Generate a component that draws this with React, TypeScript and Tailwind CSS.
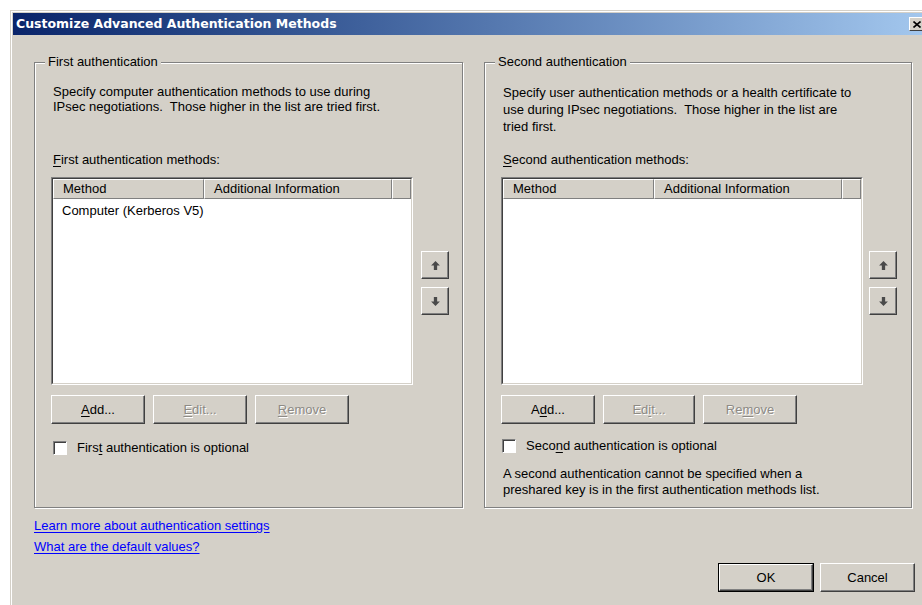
import type { ReactNode } from 'react';

// Classic raised push button (3D bevel)
const PushButton = ({
  children,
  disabled,
  isDefault,
  className = '',
}: {
  children: ReactNode;
  disabled?: boolean;
  isDefault?: boolean;
  className?: string;
}) => {
  const face = (
    <div
      className={`h-full w-full flex items-center justify-center border border-t-white border-l-white border-r-[#404040] border-b-[#404040] shadow-[inset_-1px_-1px_0_#808080] bg-[#d4d0c8] ${
        disabled ? 'text-[#8d8a85] [text-shadow:1px_1px_0_#ffffff]' : 'text-black'
      }`}
    >
      {children}
    </div>
  );
  return (
    <div className={`h-[29px] ${isDefault ? 'border border-black' : ''} ${className}`}>{face}</div>
  );
};

const U = ({ children }: { children: ReactNode }) => <span className="underline underline-offset-2">{children}</span>;

const ArrowButton = ({ dir }: { dir: 'up' | 'down' }) => (
  <div className="w-[28px] h-[28px] flex items-center justify-center border border-t-white border-l-white border-r-[#404040] border-b-[#404040] shadow-[inset_-1px_-1px_0_#808080]">
    <svg width="11" height="11" viewBox="0 0 10 10" className={dir === 'down' ? 'rotate-180' : ''}>
      <path d="M5 1 L9 5 L6.5 5 L6.5 9 L3.5 9 L3.5 5 L1 5 Z" fill="#4a4a4a" />
    </svg>
  </div>
);

const Checkbox = ({ label }: { label: ReactNode }) => (
  <div className="flex items-center gap-[10px] h-[16px]">
    <div className="w-[14px] h-[14px] bg-white border border-t-[#808080] border-l-[#808080] border-r-white border-b-white shadow-[inset_1px_1px_0_#404040]" />
    <span>{label}</span>
  </div>
);

const HeaderCell = ({ children, className = '' }: { children?: ReactNode; className?: string }) => (
  <div
    className={`h-[20px] flex items-center pl-[9px] border border-t-white border-l-white border-r-[#808080] border-b-[#808080] ${className}`}
  >
    {children}
  </div>
);

const MethodList = ({ rows }: { rows: string[] }) => (
  <div className="w-[362px] h-[208px] border border-t-[#808080] border-l-[#808080] border-r-white border-b-white">
    <div className="h-full w-full border border-t-[#404040] border-l-[#404040] border-r-[#d4d0c8] border-b-[#d4d0c8] bg-white flex flex-col">
      <div className="flex bg-[#d4d0c8]">
        <HeaderCell className="w-[151px]">Method</HeaderCell>
        <HeaderCell className="w-[188px]">Additional Information</HeaderCell>
        <HeaderCell className="flex-1" />
      </div>
      {rows.map((r) => (
        <div key={r} className="h-[22px] flex items-center pl-[9px] mt-[1px]">
          {r}
        </div>
      ))}
    </div>
  </div>
);

const GroupBox = ({
  title,
  className = '',
  children,
}: {
  title: string;
  className?: string;
  children: ReactNode;
}) => (
  <div
    className={`relative border border-[#808080] shadow-[1px_1px_0_#ffffff,inset_1px_1px_0_#ffffff] ${className}`}
  >
    <span className="absolute -top-[9px] left-[10px] px-[3px] bg-[#d4d0c8] leading-[16px]">{title}</span>
    {children}
  </div>
);

export default function App() {
  return (
    <div
      className="w-[922px] h-[605px] overflow-hidden bg-white pt-[10px] pl-[10px] text-[13px] text-black"
      style={{ fontFamily: '"Liberation Sans", Arial, sans-serif' }}
    >
      {/* window frame */}
      <div className="w-[930px] h-[620px] border-t border-l border-[#d4d0c8] bg-[#d4d0c8]">
        <div className="h-full border-t border-l border-white p-[1px] pr-0">
          {/* title bar */}
          <div className="h-[22px] flex items-center bg-gradient-to-r from-[#0a246a] to-[#a6caf0] pl-[3px]">
            <span
              className="text-white font-bold text-[12.5px]"
              style={{ fontFamily: '"DejaVu Sans", Verdana, sans-serif' }}
            >
              Customize Advanced Authentication Methods
            </span>
            <div className="ml-auto mr-[15px] w-[16px] h-[14px] shrink-0 flex items-center justify-center bg-[#d4d0c8] border border-t-white border-l-white border-r-[#404040] border-b-[#404040]">
              <svg width="8" height="7" viewBox="0 0 8 7">
                <path d="M0.5 0.5 L7.5 6.5 M7.5 0.5 L0.5 6.5" stroke="#000" strokeWidth="1.6" />
              </svg>
            </div>
          </div>

          {/* dialog body */}
          <div className="pl-[21px] pt-[27px] w-[910px]">
            <div className="flex gap-[21px]">
              <GroupBox title="First authentication" className="w-[429px] h-[446px]">
                <div className="pl-[16px] pt-[21px]">
                  <p className="ml-[2px] leading-[15px] h-[68px]">
                    Specify computer authentication methods to use during
                    <br />
                    IPsec negotiations.&nbsp; Those higher in the list are tried first.
                  </p>
                  <p className="ml-[2px] leading-[16px] h-[25px]">
                    <U>F</U>irst authentication methods:
                  </p>
                  <div className="flex items-center gap-[8px]">
                    <MethodList rows={['Computer (Kerberos V5)']} />
                    <div className="flex flex-col gap-[8px] mt-[4px]">
                      <ArrowButton dir="up" />
                      <ArrowButton dir="down" />
                    </div>
                  </div>
                  <div className="flex gap-[8px] mt-[10px]">
                    <PushButton className="w-[94px]">
                      <U>A</U>dd...
                    </PushButton>
                    <PushButton className="w-[94px]" disabled>
                      <U>E</U>dit...
                    </PushButton>
                    <PushButton className="w-[94px]" disabled>
                      <U>R</U>emove
                    </PushButton>
                  </div>
                  <div className="mt-[16px] ml-[2px]">
                    <Checkbox
                      label={
                        <>
                          Firs<U>t</U> authentication is optional
                        </>
                      }
                    />
                  </div>
                </div>
              </GroupBox>

              <GroupBox title="Second authentication" className="w-[428px] h-[446px]">
                <div className="pl-[16px] pt-[21px]">
                  <p className="ml-[2px] leading-[17px] h-[68px]">
                    Specify user authentication methods or a health certificate to
                    <br />
                    use during IPsec negotiations.&nbsp; Those higher in the list are
                    <br />
                    tried first.
                  </p>
                  <p className="ml-[2px] leading-[16px] h-[25px]">
                    <U>S</U>econd authentication methods:
                  </p>
                  <div className="flex items-center gap-[6px]">
                    <MethodList rows={[]} />
                    <div className="flex flex-col gap-[8px] mt-[4px]">
                      <ArrowButton dir="up" />
                      <ArrowButton dir="down" />
                    </div>
                  </div>
                  <div className="flex gap-[8px] mt-[10px]">
                    <PushButton className="w-[94px]">
                      A<U>d</U>d...
                    </PushButton>
                    <PushButton className="w-[92px]" disabled>
                      Ed<U>i</U>t...
                    </PushButton>
                    <PushButton className="w-[94px]" disabled>
                      Re<U>m</U>ove
                    </PushButton>
                  </div>
                  <div className="mt-[14px] ml-[1px]">
                    <Checkbox
                      label={
                        <>
                          Seco<U>n</U>d authentication is optional
                        </>
                      }
                    />
                  </div>
                  <p className="ml-[2px] mt-[12px] leading-[16px]">
                    A second authentication cannot be specified when a
                    <br />
                    preshared key is in the first authentication methods list.
                  </p>
                </div>
              </GroupBox>
            </div>

            {/* help links and dialog buttons */}
            <div className="flex flex-col gap-[5px] mt-[10px] text-[#0000ff] leading-[16px]">
              <span className="underline underline-offset-2">Learn more about authentication settings</span>
              <span className="underline underline-offset-2">What are the default values?</span>
            </div>
            <div className="flex justify-end gap-[6px] mt-[8px] pr-[8px]">
              <PushButton isDefault className="w-[96px] h-[29px]">
                OK
              </PushButton>
              <PushButton className="w-[95px] h-[29px]">Cancel</PushButton>
            </div>
          </div>
        </div>
      </div>
    </div>
  );
}
